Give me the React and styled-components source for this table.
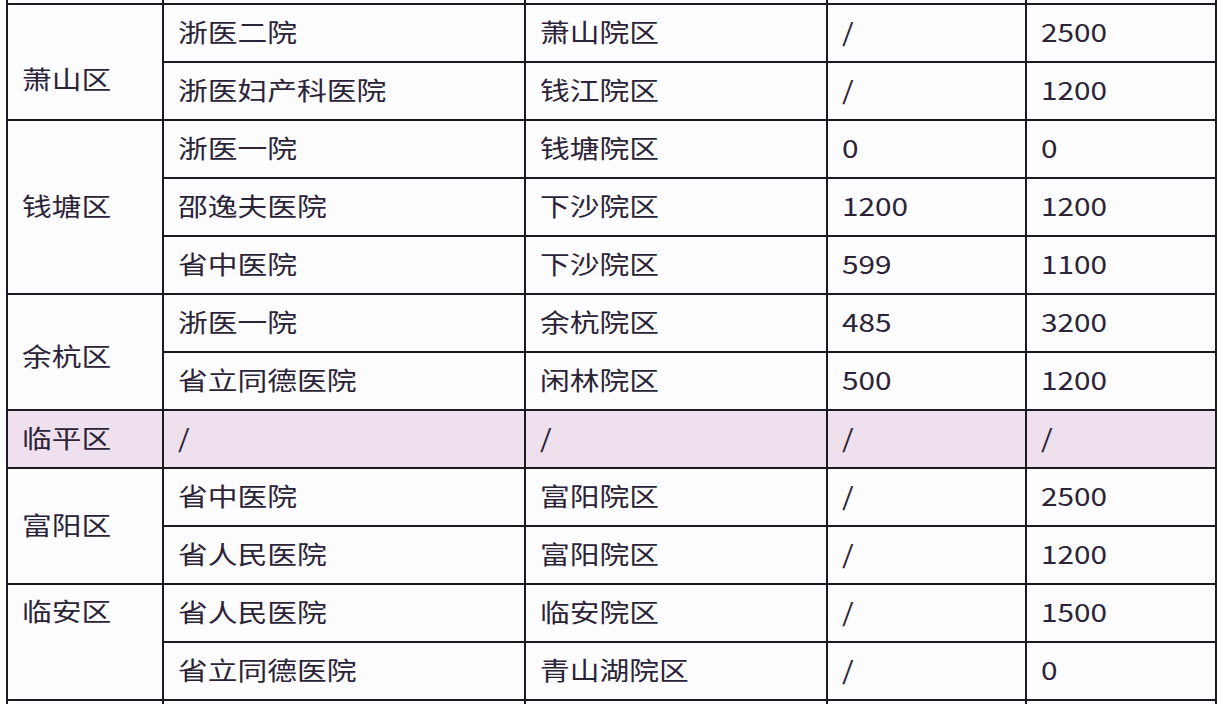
import styled, { createGlobalStyle } from "styled-components"

const GlobalStyle = createGlobalStyle`
    html, body {
        margin: 0;
        padding: 0;
        background: #fdfcfe;
    }
    body {
        width: 1222px;
        height: 706px;
        overflow: hidden;
        font-family: "Noto Sans CJK SC", "Noto Sans", sans-serif;
    }
`

const Page = styled.div`
    padding-left: 6px;
`

const Table = styled.table`
    border-collapse: collapse;
    table-layout: fixed;
    width: 1209px;
    border-top: none;
    border-bottom: none;
`

const Row = styled.tr`
    height: ${(p) => (p.$stub ? "4px" : "58px")};
    background: ${(p) => (p.$highlight ? "#efe0ee" : "transparent")};
`

const Cell = styled.td`
    border: 2px solid #1c1a24;
    border-top: ${(p) => (p.$stubTop ? "none" : "2px solid #1c1a24")};
    border-bottom: ${(p) => (p.$stubBottom ? "none" : "2px solid #1c1a24")};
    padding: ${(p) => {
        const s = (p.$shift || 0) * 2 - 3
        return s > 0 ? `${s}px 0 0 14px` : `0 0 ${-s}px 14px`
    }};
    color: #2b2337;
    font-size: 25px;
    line-height: 1;
    white-space: nowrap;
    vertical-align: middle;
`

const Label = styled.span`
    display: inline-block;
    transform: scaleX(1.19);
    transform-origin: left center;
`

const widths = [156, 362, 302, 199, 190]

const groups = [
    {
        district: "萧山区",
        shift: 18,
        rows: [
            ["浙医二院", "萧山院区", "/", "2500"],
            ["浙医妇产科医院", "钱江院区", "/", "1200"],
        ],
    },
    {
        district: "钱塘区",
        rows: [
            ["浙医一院", "钱塘院区", "0", "0"],
            ["邵逸夫医院", "下沙院区", "1200", "1200"],
            ["省中医院", "下沙院区", "599", "1100"],
        ],
    },
    {
        district: "余杭区",
        shift: 5,
        rows: [
            ["浙医一院", "余杭院区", "485", "3200"],
            ["省立同德医院", "闲林院区", "500", "1200"],
        ],
    },
    {
        district: "临平区",
        highlight: true,
        rows: [["/", "/", "/", "/"]],
    },
    {
        district: "富阳区",
        rows: [
            ["省中医院", "富阳院区", "/", "2500"],
            ["省人民医院", "富阳院区", "/", "1200"],
        ],
    },
    {
        district: "临安区",
        shift: -30,
        rows: [
            ["省人民医院", "临安院区", "/", "1500"],
            ["省立同德医院", "青山湖院区", "/", "0"],
        ],
    },
]

function StubRow({ top }) {
    return (
        <Row $stub>
            {widths.map((w, i) => (
                <Cell key={i} $stubTop={top} $stubBottom={!top} />
            ))}
        </Row>
    )
}

export default function App() {
    return (
        <>
            <GlobalStyle />
            <Page>
                <Table>
                    <colgroup>
                        {widths.map((w, i) => (
                            <col key={i} style={{ width: w }} />
                        ))}
                    </colgroup>
                    <tbody>
                        <StubRow top />
                        {groups.map((g) =>
                            g.rows.map((r, i) => (
                                <Row key={g.district + i} $highlight={g.highlight}>
                                    {i === 0 && (
                                        <Cell rowSpan={g.rows.length} $shift={g.shift}>
                                            <Label>{g.district}</Label>
                                        </Cell>
                                    )}
                                    {r.map((text, j) => (
                                        <Cell key={j}>
                                            <Label>{text}</Label>
                                        </Cell>
                                    ))}
                                </Row>
                            ))
                        )}
                        <StubRow />
                    </tbody>
                </Table>
            </Page>
        </>
    )
}
